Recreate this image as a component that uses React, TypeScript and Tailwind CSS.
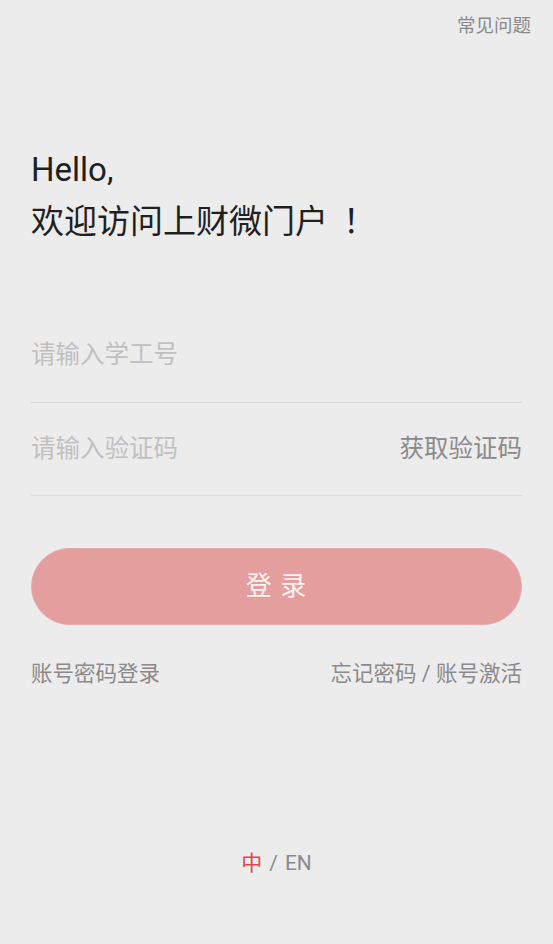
import type React from "react";
import { useState } from "react";

const font = { fontFamily: '"Roboto", "Noto Sans CJK SC", sans-serif' };

const Login: React.FC = () => {
  const [account, setAccount] = useState("");
  const [code, setCode] = useState("");

  return (
    <div
      className="min-h-screen w-full bg-[#ececec] flex flex-col"
      style={font}
    >
      <div className="flex justify-end pt-[13px] pr-[22px]">
        <a className="text-[18.5px] leading-[27px] text-[#8a8a8a]">常见问题</a>
      </div>

      <div className="px-[31px]">
        <h1 className="mt-[104px] text-[33px] leading-[52px] text-[#1f1f1f] font-normal">
          <span className="block">Hello,</span>
          <span className="block pb-[6px] leading-[46px] font-['Noto_Sans_CJK_SC',sans-serif]">
            欢迎访问上财微门户<span className="ml-[15px]">！</span>
          </span>
        </h1>

        <div className="mt-[61px]">
          <div className="h-[94px] flex items-center border-b border-[#d8d8d8]">
            <input
              value={account}
              onChange={(e) => setAccount(e.target.value)}
              placeholder="请输入学工号"
              className="flex-1 bg-transparent outline-none text-[24.5px] text-[#333] placeholder:text-[#c0c0c0]"
            />
          </div>
          <div className="h-[93px] flex items-center border-b border-[#dcdcdc]">
            <input
              value={code}
              onChange={(e) => setCode(e.target.value)}
              placeholder="请输入验证码"
              className="flex-1 min-w-0 bg-transparent outline-none text-[24.5px] text-[#333] placeholder:text-[#c0c0c0]"
            />
            <button className="text-[24.5px] text-[#8a8a8a]">获取验证码</button>
          </div>
        </div>

        <button className="mt-[52px] w-full h-[77px] rounded-full bg-[#e59e9e] border border-[#e7aaaa] text-[26px] text-[#fbf3f3] tracking-[1px]">
          登 录
        </button>

        <div className="mt-[34px] flex justify-between text-[21.5px] leading-[30px] text-[#8a8a8a]">
          <a>账号密码登录</a>
          <a>忘记密码 / 账号激活</a>
        </div>
      </div>

      <div className="mt-[159px] flex justify-center text-[21px] leading-[30px] text-[#8a8a8a]">
        <span className="text-[#e04848]">中</span>
        <span className="mx-[7px]">/</span>
        <span>EN</span>
      </div>
    </div>
  );
};

export default function App() {
  return <Login />;
}
